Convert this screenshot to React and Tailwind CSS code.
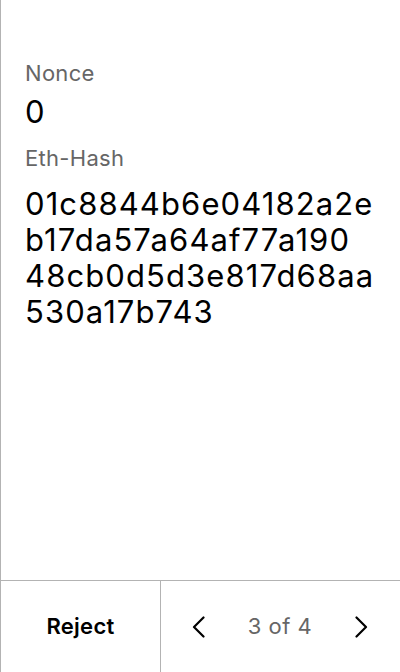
const hashLines = ['01c8844b6e04182a2e', 'b17da57a64af77a190', '48cb0d5d3e817d68aa', '530a17b743'];

function Chevron({ dir }) {
  const points = dir === 'left' ? '11.5,1.5 2,11 11.5,20.5' : '2.5,1.5 12,11 2.5,20.5';
  return (
    <svg width="14" height="22" viewBox="0 0 14 22" fill="none" stroke="black" strokeWidth="2.2" strokeLinecap="round" strokeLinejoin="round">
      <polyline points={points} />
    </svg>
  );
}

export default function App() {
  return (
    <div className="flex h-[672px] w-[400px] flex-col border-l border-[#b3b3b3] bg-white font-['Inter',sans-serif] text-black">
      <div className="flex-1 px-6 pt-[59px]">
        <p className="text-[22px] leading-[28px] tracking-[0.3px] text-[#666666]">Nonce</p>
        <p className="mt-[7px] text-[31px] leading-[36px] tracking-[1.1px]">0</p>
        <p className="mt-[14px] text-[22px] leading-[28px] tracking-[0.3px] text-[#666666]">Eth-Hash</p>
        <p className="mt-[14px] text-[31px] leading-[36px] tracking-[1.1px]">
          {hashLines.map((line) => (
            <span key={line} className="block">{line}</span>
          ))}
        </p>
      </div>

      <div className="flex h-[92px] border-t border-[#b3b3b3]">
        <button className="w-[160px] border-r border-[#b3b3b3] text-[22px] font-semibold tracking-[0.3px]">
          Reject
        </button>
        <div className="flex flex-1 items-center justify-between pl-[31px] pr-[32px]">
          <Chevron dir="left" />
          <span className="text-[22px] tracking-[0.5px] text-[#666666]">3 of 4</span>
          <Chevron dir="right" />
        </div>
      </div>
    </div>
  );
}
